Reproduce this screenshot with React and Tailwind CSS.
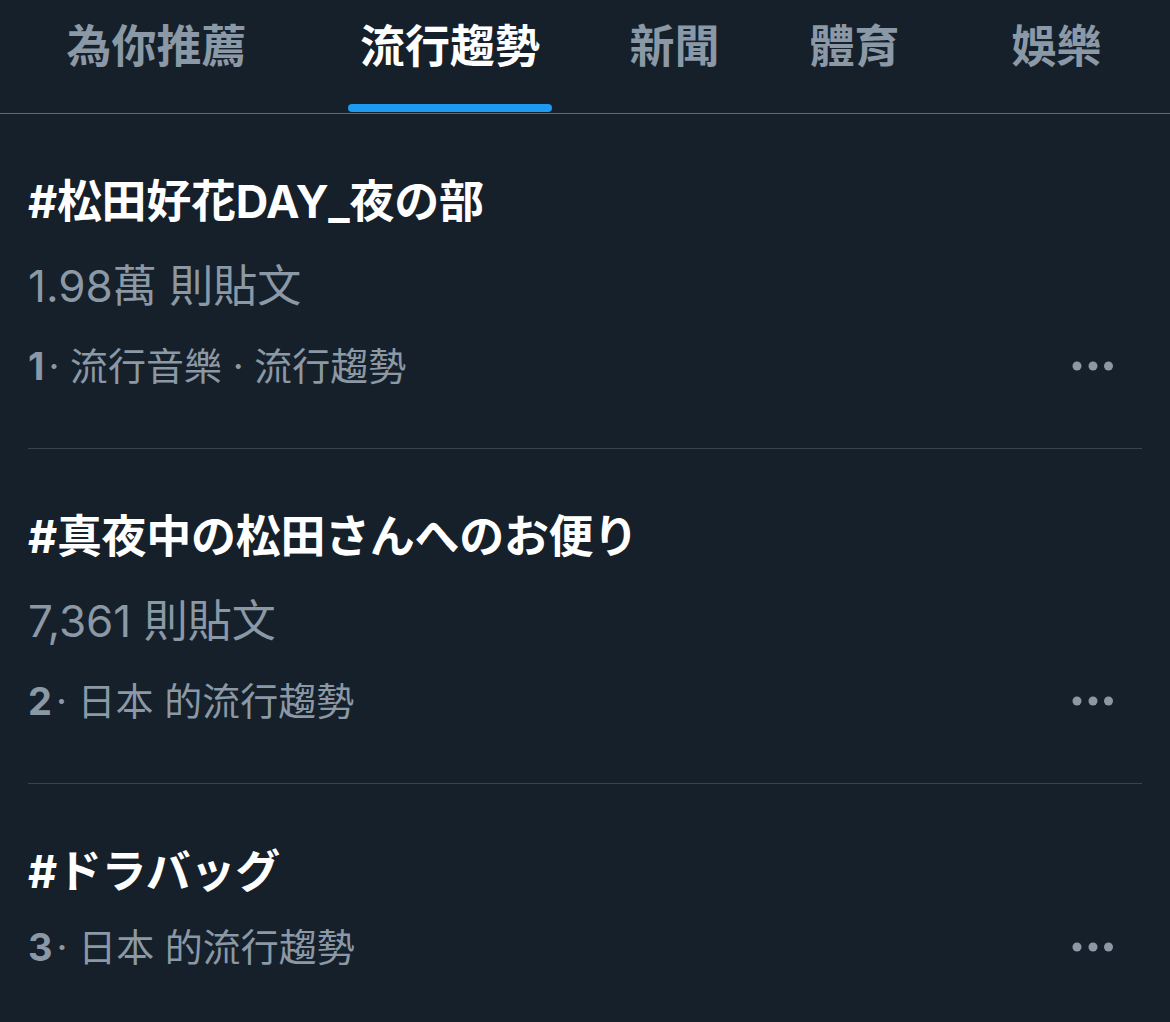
import React from 'react';

const tabs = [
  { label: '為你推薦', ml: 'ml-[55px]', w: 'w-[203px]' },
  { label: '流行趨勢', ml: 'ml-[90px]', w: 'w-[204px]', active: true },
  { label: '新聞', ml: 'ml-[66px]', w: 'w-[113px]' },
  { label: '體育', ml: 'ml-[67px]', w: 'w-[113px]' },
  { label: '娛樂', ml: 'ml-[89px]', w: 'w-[113px]' },
];

const trends = [
  { title: '#松田好花DAY_夜の部', count: '1.98萬 則貼文', rank: '1', meta: '· 流行音樂 · 流行趨勢' },
  { title: '#真夜中の松田さんへのお便り', count: '7,361 則貼文', rank: '2', meta: '· 日本 的流行趨勢' },
  { title: '#ドラバッグ', rank: '3', meta: '· 日本 的流行趨勢', last: true },
];

const zh = { fontFamily: 'Inter, "Noto Sans CJK TC", sans-serif' };
const jp = { fontFamily: 'Inter, "Noto Sans CJK JP", sans-serif' };

function Dots() {
  return (
    <svg width="46" height="12" viewBox="0 0 46 12" className="mr-[26px]">
      <circle cx="7" cy="6" r="4.5" fill="#8b98a5" />
      <circle cx="23" cy="6" r="4.5" fill="#8b98a5" />
      <circle cx="38.5" cy="6" r="4.5" fill="#8b98a5" />
    </svg>
  );
}

export default function App() {
  return (
    <div className="w-[1170px] h-[1022px] bg-[#16202a] overflow-hidden">
      {/* Tab bar */}
      <div className="flex h-[114px] border-b border-[#5f6a75]">
        {tabs.map((t) => (
          <div key={t.label} className={`${t.ml} ${t.w} flex flex-col items-center shrink-0`}>
            <div
              style={zh}
              className={`h-[104px] pt-[19px] text-[45px] leading-[56px] font-bold ${t.active ? 'text-white' : 'text-[#8b98a5]'}`}
            >
              {t.label}
            </div>
            {t.active && <div className="w-full h-[8px] rounded-full bg-[#1d9bf0]" />}
          </div>
        ))}
      </div>

      {/* Trends */}
      {trends.map((t) => (
        <div key={t.title} className="px-[28px]">
          <div className={`pt-[51px] pb-[44px] ${t.last ? '' : 'border-b border-[#38444d]'}`}>
            <div style={jp} className="text-[45px] leading-[74px] font-bold text-white tracking-[-0.3px]">
              {t.title}
            </div>
            {t.count && (
              <div style={zh} className="mt-[10px] mb-[5px] text-[44px] leading-[74px] text-[#8b98a5]">
                {t.count}
              </div>
            )}
            <div className="flex items-center justify-between h-[76px]">
              <div style={zh} className="text-[38px] leading-[76px] text-[#8b98a5]">
                <span className="font-bold mr-[4px]">{t.rank}</span>
                {t.meta}
              </div>
              <Dots />
            </div>
          </div>
        </div>
      ))}
    </div>
  );
}
